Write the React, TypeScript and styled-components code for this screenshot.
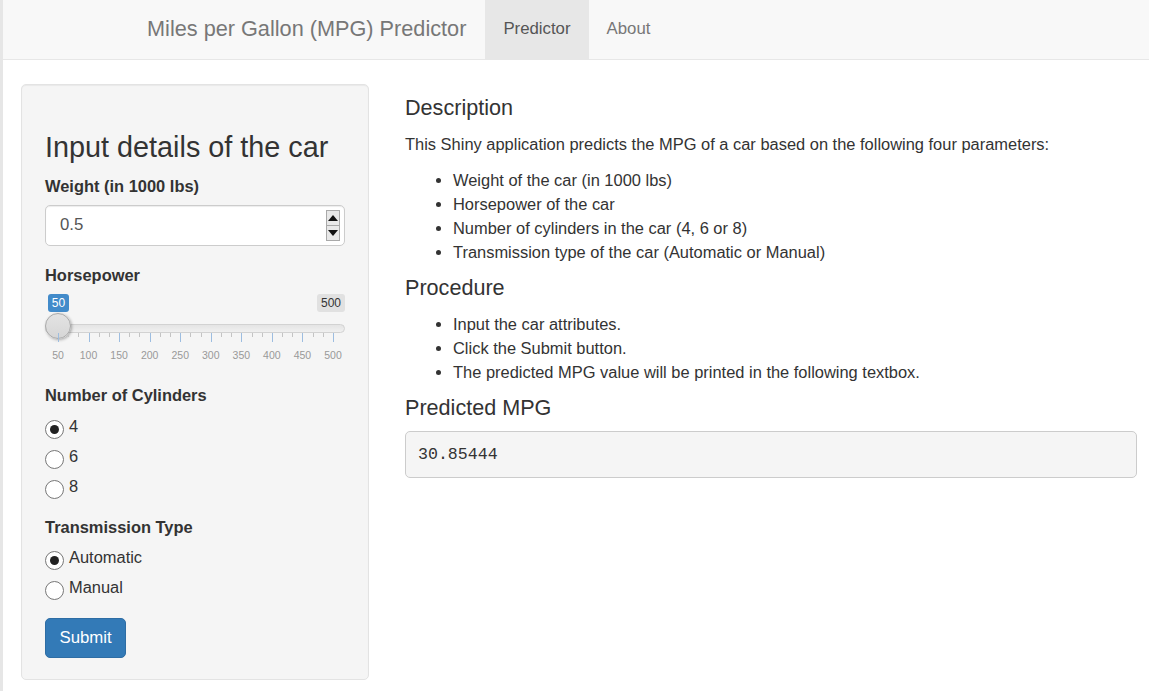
import React from 'react';
import styled, { createGlobalStyle, css } from 'styled-components';

const GlobalStyle = createGlobalStyle`
  * {
    box-sizing: border-box;
  }
  html,
  body {
    margin: 0;
    padding: 0;
    background: #fff;
  }
  body {
    font-family: 'Liberation Sans', Arial, Helvetica, sans-serif;
    font-size: 16.45px;
    line-height: 24px;
    color: #333;
  }
`;

const descriptionItems = [
  'Weight of the car (in 1000 lbs)',
  'Horsepower of the car',
  'Number of cylinders in the car (4, 6 or 8)',
  'Transmission type of the car (Automatic or Manual)',
];

const procedureItems = [
  'Input the car attributes.',
  'Click the Submit button.',
  'The predicted MPG value will be printed in the following textbox.',
];

const SLIDER_MIN = 50;
const SLIDER_MAX = 500;
const SLIDER_START = 13;
const SLIDER_SPAN = 275;
const gridValues = [50, 100, 150, 200, 250, 300, 350, 400, 450, 500];

const toX = (value: number) =>
  SLIDER_START + ((value - SLIDER_MIN) / (SLIDER_MAX - SLIDER_MIN)) * SLIDER_SPAN;

const RangeSlider = ({ value }: { value: number }) => {
  const step = SLIDER_SPAN / (gridValues.length - 1);
  return (
    <Slider>
      <FromBadge style={{ left: toX(value) - 10 }}>{value}</FromBadge>
      <MaxBadge>{SLIDER_MAX}</MaxBadge>
      <Track />
      <Handle style={{ left: toX(value) - 13 }} />
      <Grid width="300" height="10" viewBox="0 0 300 10">
        {gridValues.map((v, i) => {
          const x = Math.round(toX(v)) + 0.5;
          return (
            <g key={v}>
              <line x1={x} x2={x} y1={0} y2={9} stroke="#9dbde0" strokeWidth={1} />
              {i < gridValues.length - 1 &&
                [1, 2].map(k => {
                  const mx = Math.round(toX(v) + (step * k) / 3) + 0.5;
                  return (
                    <line key={k} x1={mx} x2={mx} y1={0} y2={4} stroke="#c4c4c4" strokeWidth={1} />
                  );
                })}
            </g>
          );
        })}
      </Grid>
      {gridValues.map(v => (
        <GridLabel key={v} style={{ left: toX(v) }}>
          {v}
        </GridLabel>
      ))}
    </Slider>
  );
};

const RadioOption = ({ label, checked }: { label: string; checked?: boolean }) => (
  <RadioRow>
    <RadioCircle $checked={checked} />
    <span>{label}</span>
  </RadioRow>
);

const App = () => {
  return (
    <>
      <GlobalStyle />
      <Page>
        <Navbar>
          <Brand>Miles per Gallon (MPG) Predictor</Brand>
          <NavList>
            <NavItem $active>Predictor</NavItem>
            <NavItem>About</NavItem>
          </NavList>
        </Navbar>
        <Content>
          <SideCol>
            <Well>
              <PanelTitle>Input details of the car</PanelTitle>
              <FormGroup $gap={17}>
                <Label>Weight (in 1000 lbs)</Label>
                <NumberBox>
                  <NumberValue>0.5</NumberValue>
                  <Spinner>
                    <SpinButton>
                      <Arrow $up />
                    </SpinButton>
                    <SpinButton>
                      <Arrow />
                    </SpinButton>
                  </Spinner>
                </NumberBox>
              </FormGroup>
              <FormGroup $gap={18}>
                <Label>Horsepower</Label>
                <RangeSlider value={50} />
              </FormGroup>
              <FormGroup $gap={17}>
                <Label>Number of Cylinders</Label>
                <RadioList>
                  <RadioOption label="4" checked />
                  <RadioOption label="6" />
                  <RadioOption label="8" />
                </RadioList>
              </FormGroup>
              <FormGroup $gap={19}>
                <Label>Transmission Type</Label>
                <RadioList $offset={6}>
                  <RadioOption label="Automatic" checked />
                  <RadioOption label="Manual" />
                </RadioList>
              </FormGroup>
              <SubmitButton>Submit</SubmitButton>
            </Well>
          </SideCol>
          <MainCol>
            <Heading>Description</Heading>
            <Paragraph>
              This Shiny application predicts the MPG of a car based on the following four
              parameters:
            </Paragraph>
            <List>
              {descriptionItems.map(item => (
                <li key={item}>{item}</li>
              ))}
            </List>
            <Heading>Procedure</Heading>
            <List>
              {procedureItems.map(item => (
                <li key={item}>{item}</li>
              ))}
            </List>
            <Heading>Predicted MPG</Heading>
            <Output>30.85444</Output>
          </MainCol>
        </Content>
      </Page>
    </>
  );
};
export default App;

const Page = styled.div`
  min-height: 691px;
  border-left: 3px solid #e6e6e6;
`;

const Navbar = styled.nav`
  display: flex;
  height: 60px;
  padding-left: 126px;
  background: #f8f8f8;
  border-bottom: 1px solid #e7e7e7;
  margin-bottom: 24px;
`;

const Brand = styled.div`
  padding: 17px 19px 18px 18px;
  font-size: 21.7px;
  line-height: 24px;
  color: #777;
`;

const NavList = styled.ul`
  display: flex;
  margin: 0;
  padding: 0;
  list-style: none;
`;

const NavItem = styled.li<{ $active?: boolean }>`
  padding: 17px 18px 18px;
  font-size: 16.8px;
  line-height: 24px;
  color: #777;
  ${({ $active }) =>
    $active &&
    css`
      color: #555;
      background: #e7e7e7;
    `}
`;

const Content = styled.div`
  display: flex;
  align-items: flex-start;
`;

const SideCol = styled.div`
  width: 384px;
  flex: none;
  padding: 0 18px;
`;

const Well = styled.div`
  padding: 23px 23px 21px;
  background: #f5f5f5;
  border: 1px solid #e3e3e3;
  border-radius: 5px;
  box-shadow: inset 0 1px 1px rgba(0, 0, 0, 0.05);
`;

const PanelTitle = styled.h3`
  margin: 24px 0 10px;
  font-size: 28.8px;
  font-weight: 500;
  line-height: 1.1;
  color: #333;
`;

const FormGroup = styled.div<{ $gap: number }>`
  margin-bottom: ${({ $gap }) => $gap}px;
`;

const Label = styled.label`
  display: block;
  font-weight: 700;
  line-height: 24px;
`;

const NumberBox = styled.div`
  display: flex;
  align-items: center;
  justify-content: space-between;
  height: 41px;
  margin-top: 7px;
  padding: 0 4px 0 14px;
  background: #fff;
  border: 1px solid #ccc;
  border-radius: 5px;
  box-shadow: inset 0 1px 1px rgba(0, 0, 0, 0.075);
  font-size: 16.8px;
  color: #555;
`;

const NumberValue = styled.span`
  line-height: 24px;
`;

const Spinner = styled.div`
  display: flex;
  flex-direction: column;
  width: 14px;
  height: 31px;
`;

const SpinButton = styled.div`
  display: flex;
  align-items: center;
  justify-content: center;
  flex: 1;
  background: #e8e8e8;
  border: 1px solid #a9a9a9;
  & + & {
    border-top: none;
  }
`;

const Arrow = styled.span<{ $up?: boolean }>`
  width: 0;
  height: 0;
  border-left: 5px solid transparent;
  border-right: 5px solid transparent;
  ${({ $up }) =>
    $up
      ? css`
          border-bottom: 6px solid #111;
        `
      : css`
          border-top: 6px solid #111;
        `}
`;

const Slider = styled.div`
  position: relative;
  height: 78px;
`;

const badge = css`
  position: absolute;
  top: 7px;
  height: 18px;
  padding: 0 4px;
  border-radius: 3px;
  font-size: 12px;
  line-height: 18px;
  text-align: center;
`;

const FromBadge = styled.div`
  ${badge};
  width: 21px;
  padding: 0;
  background: #428bca;
  color: #fff;
`;

const MaxBadge = styled.div`
  ${badge};
  right: 0;
  background: #e1e1e1;
  color: #333;
`;

const Track = styled.div`
  position: absolute;
  top: 37px;
  left: 0;
  right: 0;
  height: 9px;
  background: linear-gradient(#e4e4e4, #f0f0f0);
  border: 1px solid #d2d2d2;
  border-radius: 5px;
`;

const Handle = styled.div`
  position: absolute;
  top: 26px;
  width: 26px;
  height: 26px;
  border-radius: 50%;
  background: linear-gradient(#e3e3e3, #d6d6d6);
  border: 1px solid #a8a8a8;
  box-shadow: 1px 1px 3px rgba(0, 0, 0, 0.3);
`;

const Grid = styled.svg`
  position: absolute;
  top: 46px;
  left: 0;
  display: block;
`;

const GridLabel = styled.span`
  position: absolute;
  top: 61px;
  transform: translateX(-50%);
  font-size: 10.5px;
  line-height: 14px;
  color: #999;
`;

const RadioList = styled.div<{ $offset?: number }>`
  display: flex;
  flex-direction: column;
  gap: 6px;
  margin-top: ${({ $offset }) => $offset ?? 7}px;
`;

const RadioRow = styled.div`
  display: flex;
  align-items: flex-start;
  height: 24px;
  line-height: 24px;
`;

const RadioCircle = styled.span<{ $checked?: boolean }>`
  display: flex;
  align-items: center;
  justify-content: center;
  width: 19px;
  height: 19px;
  margin: 6px 5px 0 0;
  flex: none;
  background: #fff;
  border: 1px solid #777;
  border-radius: 50%;
  ${({ $checked }) =>
    $checked &&
    css`
      &::after {
        content: '';
        width: 9px;
        height: 9px;
        border-radius: 50%;
        background: #222;
      }
    `}
`;

const SubmitButton = styled.button`
  display: block;
  height: 40px;
  padding: 0 13.5px;
  font-family: inherit;
  font-size: 16.8px;
  line-height: 24px;
  color: #fff;
  background: #337ab7;
  border: 1px solid #2e6da4;
  border-radius: 5px;
`;

const MainCol = styled.div`
  flex: 1;
  min-width: 0;
  padding: 0 12px 0 18px;
`;

const Heading = styled.h4`
  margin: 12px 0;
  font-size: 21.6px;
  font-weight: 500;
  line-height: 1.1;
  color: #333;
`;

const Paragraph = styled.p`
  margin: 0 0 12px;
`;

const List = styled.ul`
  margin: 0 0 12px;
  padding-left: 48px;
`;

const Output = styled.pre`
  margin: 0 0 12px;
  padding: 11px 12px;
  font-family: 'Liberation Mono', 'Courier New', monospace;
  font-size: 16.6px;
  line-height: 23px;
  color: #333;
  background: #f5f5f5;
  border: 1px solid #ccc;
  border-radius: 5px;
`;
